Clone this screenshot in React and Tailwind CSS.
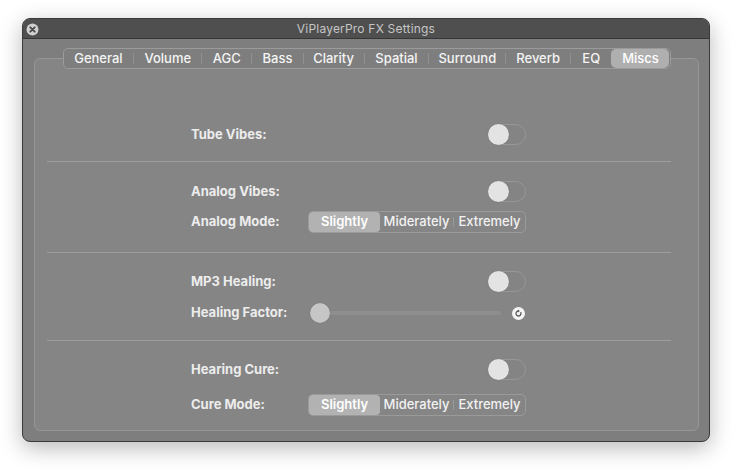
import React from 'react';

const tabs = [
  { name: 'General', w: 'w-[71px]' },
  { name: 'Volume', w: 'w-[68px]' },
  { name: 'AGC', w: 'w-[50px]' },
  { name: 'Bass', w: 'w-[51px]' },
  { name: 'Clarity', w: 'w-[61px]' },
  { name: 'Spatial', w: 'w-[65px]' },
  { name: 'Surround', w: 'w-[77px]' },
  { name: 'Reverb', w: 'w-[65px]' },
  { name: 'EQ', w: 'w-[41px]' },
  { name: 'Miscs', w: 'w-[59px]', active: true },
];

const Toggle = () => (
  <div className="relative w-[38px] h-[21px] rounded-full bg-[#848484] border border-[#979797]">
    <div className="absolute -left-px -top-px w-[21px] h-[21px] rounded-full bg-[#e3e3e3] shadow-[0_0_1px_rgba(0,0,0,0.3)]" />
  </div>
);

const Segmented = () => (
  <div className="flex items-stretch w-[218px] h-[22px] rounded-[5px] border border-[#9a9a9a] text-[13px] font-medium text-[#f2f2f2]">
    <div className="w-[71px] flex items-center justify-center rounded-[4px] bg-[#b2b2b2] text-white font-semibold">
      Slightly
    </div>
    <div className="w-[73px] flex items-center justify-center">Miderately</div>
    <div className="w-px my-[5px] bg-[#999999]" />
    <div className="flex-1 flex items-center justify-center">Extremely</div>
  </div>
);

const Row = ({ label, children, className = '' }) => (
  <div className={`flex items-center pl-[156px] ${className}`}>
    <div className="w-[117px] text-[13px] font-bold text-[#ececec]">{label}</div>
    <div className="w-[218px] flex justify-end">{children}</div>
  </div>
);

const Divider = ({ className = '' }) => (
  <div className={`ml-[12px] w-[624px] h-px bg-[#9d9d9d] ${className}`} />
);

const Slider = () => (
  <div className="relative w-[218px] h-[20px] flex items-center">
    <div className="ml-[2px] w-[191px] h-[4px] rounded-full bg-[#8e8e8e]" />
    <div className="absolute left-[2px] top-0 w-[20px] h-[20px] rounded-full bg-[#c6c6c6] shadow-[0_0_1px_rgba(0,0,0,0.3)]" />
    <svg className="ml-auto mr-[1px]" width="13" height="13" viewBox="0 0 13 13">
      <circle cx="6.5" cy="6.5" r="6.5" fill="#f4f4f4" />
      <path d="M8.6 5.2 A2.5 2.5 0 1 1 6.5 4" fill="none" stroke="#5a5a5a" strokeWidth="1.3" />
      <path d="M6 2.6 L7.8 4 L6 5.4 Z" fill="#5a5a5a" />
    </svg>
  </div>
);

export default function App() {
  return (
    <div className="w-[732px] h-[468px] bg-white pt-[18px] pl-[22px]" style={{ fontFamily: 'Inter, "Liberation Sans", sans-serif' }}>
      <div className="w-[688px] h-[424px] rounded-[8px] overflow-hidden border border-[#3a3a3a] bg-[#7e7e7e] shadow-[0_6px_22px_rgba(0,0,0,0.28)] flex flex-col">
        <div className="relative h-[20px] bg-[#4f4f4f] border-b border-[#363636] flex items-center justify-center">
          <svg className="absolute left-[3px] top-[4px]" width="13" height="13" viewBox="0 0 13 13">
            <circle cx="6.5" cy="6.5" r="6" fill="#cfcfcf" />
            <path d="M4.3 4.3 L8.7 8.7 M8.7 4.3 L4.3 8.7" stroke="#4a4a4a" strokeWidth="1.8" strokeLinecap="round" />
          </svg>
          <span className="text-[12px] text-[#c6c6c6] tracking-[0.2px]">ViPlayerPro FX Settings</span>
        </div>
        <div className="pt-[19px] pl-[11px]">
          <div className="w-[665px] h-[373px] rounded-[6px] border border-[#979797] bg-[#858585]">
            <div className="mx-auto -mt-[11px] w-[608px] h-[21px] flex items-center rounded-[5px] border border-[#9b9b9b] bg-[#7e7e7e] text-[13px] font-medium text-[#f4f4f4]">
              {tabs.map((t, i) => (
                <React.Fragment key={t.name}>
                  {i > 0 && !t.active && <div className="w-px h-[11px] bg-[#909090]" />}
                  <div className={`${t.w} h-full flex items-center justify-center ${t.active ? 'bg-[#afafaf] rounded-[5px] text-white' : ''}`}>
                    {t.name}
                  </div>
                </React.Fragment>
              ))}
            </div>

            <Row label="Tube Vibes:" className="mt-[55px] h-[21px]">
              <Toggle />
            </Row>
            <Divider className="mt-[16px]" />

            <Row label="Analog Vibes:" className="mt-[19px] h-[21px]">
              <Toggle />
            </Row>
            <Row label="Analog Mode:" className="mt-[9px] h-[22px]">
              <Segmented />
            </Row>
            <Divider className="mt-[19px]" />

            <Row label="MP3 Healing:" className="mt-[18px] h-[21px]">
              <Toggle />
            </Row>
            <Row label="Healing Factor:" className="mt-[11px] h-[20px]">
              <Slider />
            </Row>
            <Divider className="mt-[17px]" />

            <Row label="Hearing Cure:" className="mt-[18px] h-[21px]">
              <Toggle />
            </Row>
            <Row label="Cure Mode:" className="mt-[14px] h-[22px]">
              <Segmented />
            </Row>
          </div>
        </div>
      </div>
    </div>
  );
}
